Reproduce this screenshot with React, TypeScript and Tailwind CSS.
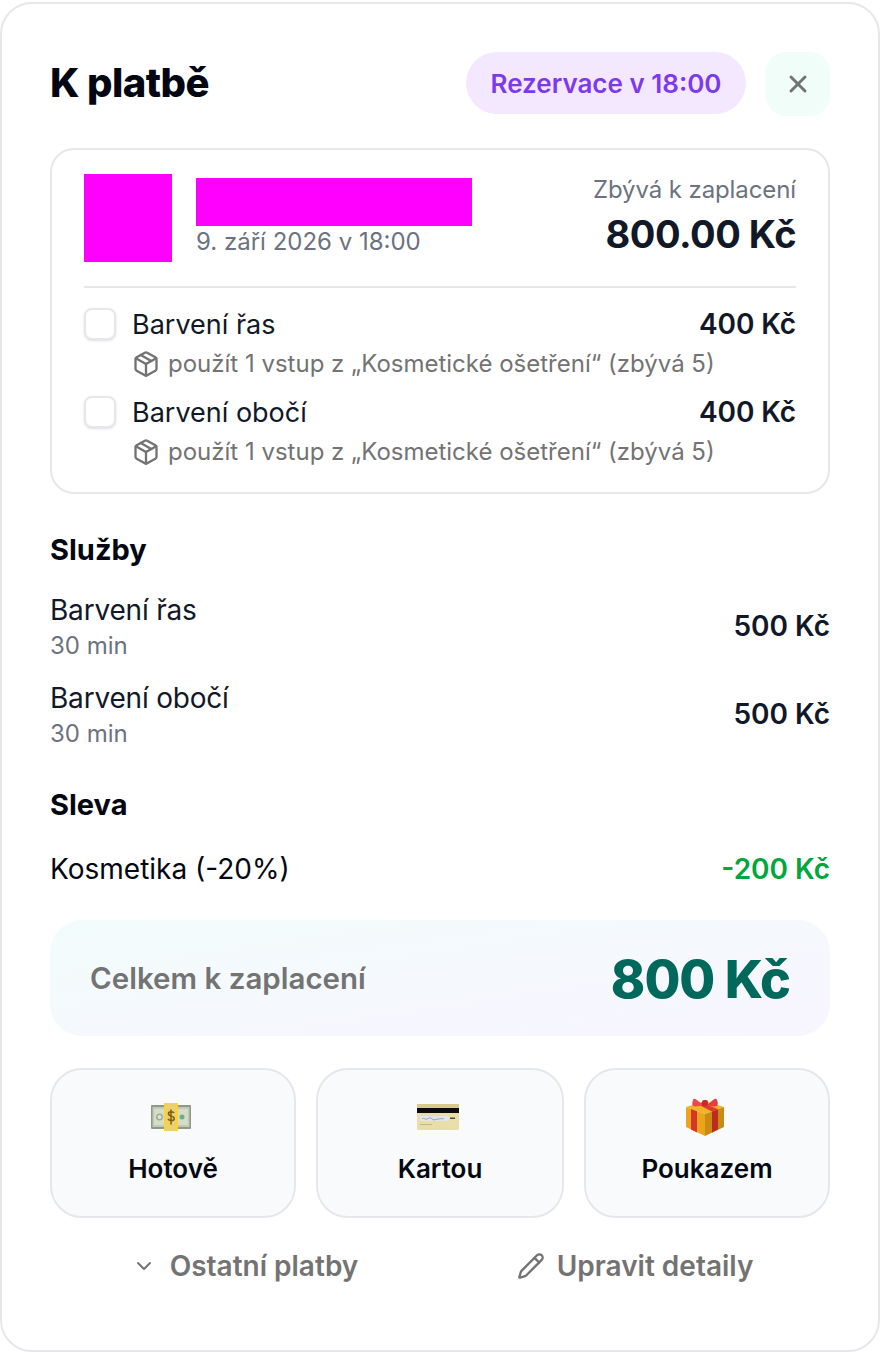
import { ChevronDown, Package, Pencil, X } from 'lucide-react';

const lineItems = [
    { name: 'Barvení řas', price: '400 Kč' },
    { name: 'Barvení obočí', price: '400 Kč' },
];

const services = [
    { name: 'Barvení řas', duration: '30 min', price: '500 Kč' },
    { name: 'Barvení obočí', duration: '30 min', price: '500 Kč' },
];

function CashIcon() {
    return (
        <svg width="40" height="28" viewBox="0 0 40 28">
            <rect x="0" y="2" width="40" height="24" rx="1" fill="#8f9886" />
            <rect x="1.500" y="4" width="37" height="20" fill="#c2cab4" />
            <rect x="3" y="6" width="34" height="16" fill="#d6dcca" />
            <circle cx="8.500" cy="14" r="3.500" fill="#a1ab95" />
            <circle cx="8.500" cy="14" r="2" fill="#dfe4d5" />
            <circle cx="31" cy="14" r="2.500" fill="#6fae7c" />
            <rect x="13" y="0" width="14" height="28" fill="#fbd52c" />
            <rect x="15" y="0" width="10" height="28" fill="#ecd06e" />
            <path d="M23 10c-.6-1.700-5.600-2.100-5.600.8 0 3 5.800 1.600 5.800 4.600 0 2.900-5.200 2.700-6.200.5M20 6.500v15" fill="none" stroke="#7d5d12" strokeWidth="1.500" />
        </svg>
    );
}

function CardIcon() {
    return (
        <svg width="42" height="28" viewBox="0 0 42 28">
            <rect x="0" y="1" width="42" height="26" rx="1.500" fill="#e8dfa8" />
            <rect x="0" y="1" width="42" height="4" fill="#d8ca8a" />
            <rect x="0" y="5" width="42" height="5" fill="#0b0b0b" />
            <rect x="3" y="13" width="29" height="5" fill="#e2e6e4" />
            <path d="M5 16c2-2 3 1 5 0s3-2 5 0 4 0 6 0 4-1 6 0" fill="none" stroke="#7f8fb5" strokeWidth="0.800" />
            <rect x="33" y="14.500" width="5" height="1.500" fill="#4b4b3c" />
            <rect x="3" y="21" width="12" height="1" fill="#c4b67c" />
        </svg>
    );
}

function GiftIcon() {
    return (
        <svg width="40" height="40" viewBox="0 0 40 40">
            <path d="M1 10 20 4l19 6-19 7z" fill="#f0b429" />
            <path d="M1 10l19 7v22L1 30z" fill="#eaa51d" />
            <path d="M20 17l19-7v20L20 39z" fill="#c98c10" />
            <path d="M6 12v20.500l6 3V14.200z" fill="#d8342c" />
            <path d="M27 14.400v21l6-3V12.200z" fill="#b92c22" />
            <path d="M12 7l5-1.500 16 6.700-6 2.200z" fill="#e0392f" />
            <path d="M18 8C12 3 9 0 8 3c-1 2-1 5 0 6 3 1 7 0 10-1z" fill="#ec4a47" />
            <path d="M22 8c6-5 9-8 10-5 1 2 1 5 0 6-3 1-7 0-10-1z" fill="#e53e3c" />
            <rect x="17" y="3" width="6" height="6" rx="2" fill="#c92a2a" />
        </svg>
    );
}

const payments = [
    { label: 'Hotově', icon: <CashIcon /> },
    { label: 'Kartou', icon: <CardIcon /> },
    { label: 'Poukazem', icon: <GiftIcon /> },
];

export default function App() {
    return (
        <main className="h-[1352px] w-[880px] bg-white pt-[2px] font-['Inter',sans-serif]">
            <div className="h-[1350px] rounded-[32px] border-2 border-[#e5e7eb] px-[48px] pt-[48px]">
                {/* Header */}
                <div className="flex items-start justify-between">
                    <h1 className="mt-[6px] text-[40px] font-extrabold leading-[50px] tracking-[-0.6px] text-[#030712]">K platbě</h1>
                    <div className="flex gap-[20px]">
                        <div className="flex h-[62px] w-[280px] items-center justify-center rounded-full bg-[#f3e8ff] text-[26px] font-semibold text-[#7c3aed]">
                            Rezervace v 18:00
                        </div>
                        <button className="flex h-[64px] w-[64px] items-center justify-center rounded-[20px] bg-[#f0fdf9] text-[#737373]">
                            <X size={28} strokeWidth={2.500} />
                        </button>
                    </div>
                </div>

                {/* Summary card */}
                <section className="mt-[32px] h-[346px] rounded-[24px] border-2 border-[#e5e7eb] px-[32px] pt-[24px]">
                    <div className="flex items-start justify-between border-b-2 border-[#e5e7eb] pb-[24px]">
                        <div className="flex gap-[24px]">
                            <div className="h-[88px] w-[88px] bg-[#ff00ff]" />
                            <div className="pt-[4px]">
                                <div className="h-[48px] w-[276px] bg-[#ff00ff]" />
                                <p className="text-[24px] leading-[32px] text-[#6b7280]">9. září 2026 v 18:00</p>
                            </div>
                        </div>
                        <div className="text-right">
                            <p className="text-[24px] leading-[32px] tracking-[-0.1px] text-[#6b7280]">Zbývá k zaplacení</p>
                            <p className="mt-[2px] text-[38px] font-bold leading-[52px] tracking-[-0.5px] text-[#111827]">800.00 Kč</p>
                        </div>
                    </div>
                    <div className="mt-[17px] flex flex-col gap-[8px]">
                        {lineItems.map((item) => (
                            <div key={item.name} className="flex h-[80px] items-start gap-[16px]">
                                <div className="mt-[3px] h-[32px] w-[32px] rounded-[8px] border-2 border-[#e5e7eb] bg-white shadow-sm" />
                                <div className="flex-1">
                                    <div className="flex items-center justify-between leading-[39px]">
                                        <span className="text-[27px] text-[#111827]">{item.name}</span>
                                        <span className="text-[28px] font-semibold tracking-[-0.1px] text-[#111827]">{item.price}</span>
                                    </div>
                                    <div className="flex items-center gap-[8px] text-[24px] leading-[40px] text-[#737373]">
                                        <Package size={28} strokeWidth={2} />
                                        <span>použít 1 vstup z „Kosmetické ošetření“ (zbývá 5)</span>
                                    </div>
                                </div>
                            </div>
                        ))}
                    </div>
                </section>

                {/* Services */}
                <h2 className="mt-[36px] text-[29px] font-bold leading-[40px] text-[#030712]">Služby</h2>
                <div className="mt-[20px] flex flex-col gap-[16px]">
                    {services.map((service) => (
                        <div key={service.name} className="flex h-[72px] items-center justify-between">
                            <div>
                                <p className="text-[28px] leading-[40px] tracking-[-0.2px] text-[#111827]">{service.name}</p>
                                <p className="text-[24px] leading-[32px] text-[#6b7280]">{service.duration}</p>
                            </div>
                            <span className="text-[28px] font-semibold text-[#111827]">{service.price}</span>
                        </div>
                    ))}
                </div>

                {/* Discount */}
                <h2 className="mt-[35px] text-[29px] font-bold leading-[40px] text-[#030712]">Sleva</h2>
                <div className="mt-[24px] flex items-center justify-between leading-[40px]">
                    <span className="text-[28px] text-[#030712]">Kosmetika (-20%)</span>
                    <span className="text-[28px] font-semibold text-[#00a63e]">-200 Kč</span>
                </div>

                {/* Total */}
                <div className="mt-[31px] flex h-[116px] items-center justify-between rounded-[32px] bg-gradient-to-br from-[#f2fcfb] to-[#f8f5ff] px-[40px]">
                    <span className="text-[29.500px] font-semibold text-[#737373]">Celkem k zaplacení</span>
                    <span className="pt-[4px] text-[52px] font-extrabold tracking-[-1px] text-[#00695c]">800 Kč</span>
                </div>

                {/* Payment buttons */}
                <div className="mt-[32px] grid grid-cols-[246px_248px_246px] gap-[20px]">
                    {payments.map((payment) => (
                        <button key={payment.label} className="flex h-[150px] flex-col items-center rounded-[32px] border-2 border-[#e5e7eb] bg-[#f9fafb] pt-[27px]">
                            <div className="mr-[4px] flex h-[40px] items-center">{payment.icon}</div>
                            <span className="mt-[12px] text-[26px] font-semibold leading-[40px] text-[#030712]">{payment.label}</span>
                        </button>
                    ))}
                </div>

                {/* Footer actions */}
                <div className="mt-[28px] grid grid-cols-2">
                    <button className="flex items-center justify-center gap-[14px] text-[28px] font-semibold leading-[40px] text-[#737373]">
                        <ChevronDown size={24} strokeWidth={2} />
                        Ostatní platby
                    </button>
                    <button className="flex items-center justify-center gap-[12px] text-[28px] font-semibold leading-[40px] text-[#737373]">
                        <Pencil size={28} strokeWidth={2} />
                        Upravit detaily
                    </button>
                </div>
            </div>
        </main>
    );
}
